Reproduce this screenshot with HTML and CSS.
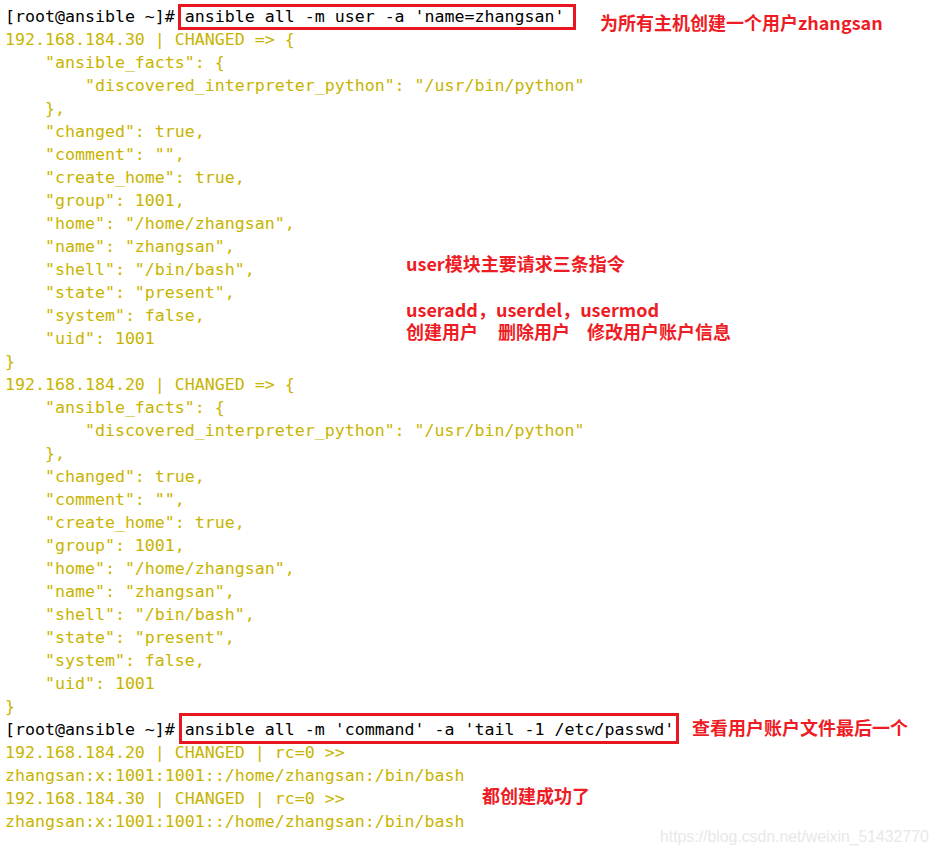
FILE: index.html
```html
<!DOCTYPE html>
<html lang="zh-CN">
<head>
<meta charset="utf-8">
<title>ansible user</title>
<link rel="stylesheet" href="styles.css">
</head>
<body>
<div class="canvas">
<pre class="term"><span class="k">[root@ansible ~]# <span class="box box1">ansible all -m user -a 'name=zhangsan'</span></span>
192.168.184.30 | CHANGED => {
    "ansible_facts": {
        "discovered_interpreter_python": "/usr/bin/python"
    }, 
    "changed": true, 
    "comment": "", 
    "create_home": true, 
    "group": 1001, 
    "home": "/home/zhangsan", 
    "name": "zhangsan", 
    "shell": "/bin/bash", 
    "state": "present", 
    "system": false, 
    "uid": 1001
}
192.168.184.20 | CHANGED => {
    "ansible_facts": {
        "discovered_interpreter_python": "/usr/bin/python"
    }, 
    "changed": true, 
    "comment": "", 
    "create_home": true, 
    "group": 1001, 
    "home": "/home/zhangsan", 
    "name": "zhangsan", 
    "shell": "/bin/bash", 
    "state": "present", 
    "system": false, 
    "uid": 1001
}
<span class="k">[root@ansible ~]# <span class="box box2">ansible all -m 'command' -a 'tail -1 /etc/passwd'</span></span>
192.168.184.20 | CHANGED | rc=0 >>
zhangsan:x:1001:1001::/home/zhangsan:/bin/bash
192.168.184.30 | CHANGED | rc=0 >>
zhangsan:x:1001:1001::/home/zhangsan:/bin/bash</pre>

<div class="note n1">为所有主机创建一个用户zhangsan</div>
<div class="note n2">user模块主要请求三条指令</div>
<div class="note n3">useradd，userdel，usermod</div>
<div class="note n4"><span>创建用户</span><span class="g1">删除用户</span><span class="g2">修改用户账户信息</span></div>
<div class="note n5">查看用户账户文件最后一个</div>
<div class="note n6">都创建成功了</div>
<div class="wm">https://blog.csdn.net/weixin_51432770</div>
</div>
</body>
</html>
```

FILE: styles.css
```css
html, body {
  margin: 0;
  padding: 0;
  background: #ffffff;
}

.canvas {
  position: relative;
  width: 941px;
  height: 857px;
  overflow: hidden;
  background: #ffffff;
}

.term {
  margin: 0;
  padding: 5px 0 0 5px;
  font-family: "DejaVu Sans Mono", "Liberation Mono", monospace;
  font-size: 16.6px;
  line-height: 23px;
  color: #c8b400;
  white-space: pre;
}

.k {
  color: #000000;
}

.box {
  border: 3px solid #e8161e;
  color: #000000;
}

.box1 {
  padding: 0 9px 1px 4px;
  margin-left: -7px;
}

.box2 {
  padding: 4px 2px 2px 3px;
  margin-left: -6px;
}

.note {
  position: absolute;
  font-family: "Noto Sans CJK SC", "Noto Sans", sans-serif;
  font-weight: 700;
  font-size: 18px;
  line-height: 20px;
  color: #ee1c25;
  white-space: nowrap;
}

.n1 { left: 600px; top: 12px; }
.n2 { left: 406px; top: 253px; }
.n3 { left: 406px; top: 299px; }
.n4 { left: 406px; top: 321px; display: flex; }
.n4 .g1 { margin-left: 20px; }
.n4 .g2 { margin-left: 17px; }
.n5 { left: 692px; top: 717px; }
.n6 { left: 482px; top: 785px; }

.wm {
  position: absolute;
  left: 660px;
  top: 828px;
  font-family: "Liberation Sans", Arial, sans-serif;
  font-size: 15.8px;
  line-height: 18px;
  color: #e8e8e8;
  white-space: nowrap;
}
```
